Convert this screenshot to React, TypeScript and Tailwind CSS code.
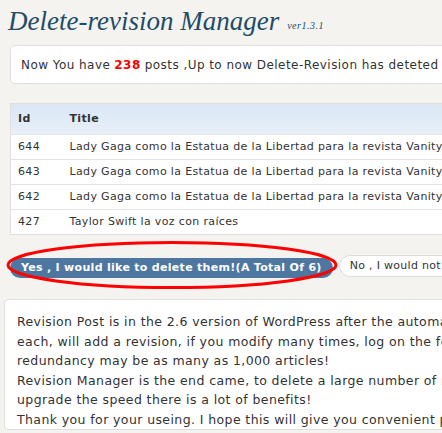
const rows = [
  { id: "644", title: "Lady Gaga como la Estatua de la Libertad para la revista Vanity Fair" },
  { id: "643", title: "Lady Gaga como la Estatua de la Libertad para la revista Vanity Fair" },
  { id: "642", title: "Lady Gaga como la Estatua de la Libertad para la revista Vanity Fair" },
  { id: "427", title: "Taylor Swift la voz con raíces" },
];

export default function App() {
  return (
    <div className="w-[442px] h-[433px] overflow-hidden bg-[#f4f3ef] font-['DejaVu_Sans',sans-serif] text-[#333]">
      <div className="w-[900px] pl-[8px] pt-[4px]">
        <h1 className="h-[34px] flex items-end font-['Liberation_Serif',serif] italic text-[27px] leading-[34px] text-[#1f4c68] whitespace-nowrap">
          Delete-revision Manager
          <span className="ml-[8px] mb-[6px] text-[10px] leading-[12px] tracking-[0.5px]">ver1.3.1</span>
        </h1>

        <div className="ml-[2px] mt-[7px] h-[39px] bg-white border border-[#dfdfdf] rounded-[5px] flex items-center pl-[10px] text-[12px] tracking-[0.45px] whitespace-nowrap">
          Now You have <b className="text-[#ff0000] mx-[4px]">238</b> posts ,Up to now Delete-Revision has deteted <b className="text-[#ff0000] mx-[4px]">6</b> revisions.
        </div>

        <table className="ml-[2px] mt-[19px] w-[700px] bg-white border border-[#dfdfdf] text-[11px] tracking-[0.35px] border-collapse">
          <thead>
            <tr className="h-[31px] bg-gradient-to-b from-[#dae7f4] to-[#e8f0f8] text-left">
              <th className="w-[59px] pl-[7px] font-bold">Id</th>
              <th className="font-bold">Title</th>
            </tr>
          </thead>
          <tbody>
            {rows.map((r) => (
              <tr key={r.id} className="h-[25px] border-t border-[#e3e3e3]">
                <td className="pl-[7px]">{r.id}</td>
                <td className="whitespace-nowrap">{r.title}</td>
              </tr>
            ))}
          </tbody>
        </table>

        <div className="mt-[19px] flex items-center gap-[6px] whitespace-nowrap">
          <div className="relative">
            <button className="ml-[2px] h-[20px] px-[11px] rounded-full bg-[#4d76a0] text-white font-bold text-[11px] tracking-[0.3px]">
              Yes , I would like to delete them!(A Total Of 6)
            </button>
            <svg className="absolute left-[-3px] top-[-14px]" width="336" height="50" viewBox="0 0 336 50">
              <ellipse cx="167" cy="25" rx="164" ry="22.5" fill="none" stroke="#ff0000" strokeWidth="3" />
            </svg>
          </div>
          <button className="h-[22px] px-[10px] rounded-full bg-white border border-[#dcdcdc] text-[11px] tracking-[0.3px] text-[#333]">
            No , I would not like to delete them!
          </button>
        </div>

        <div className="ml-[-4px] mt-[21px] bg-white border border-[#dfdfdf] rounded-[4px] pl-[12px] pt-[12px] text-[12.5px] tracking-[0.4px] leading-[19.5px] whitespace-nowrap">
          <p>Revision Post is in the 2.6 version of WordPress after the automatic saving</p>
          <p>each, will add a revision, if you modify many times, log on the few times,</p>
          <p>redundancy may be as many as 1,000 articles!</p>
          <p>Revision Manager is the end came, to delete a large number of revisions,</p>
          <p>upgrade the speed there is a lot of benefits!</p>
          <p>Thank you for your useing. I hope this will give you convenient plug-in.</p>
        </div>
      </div>
    </div>
  );
}
